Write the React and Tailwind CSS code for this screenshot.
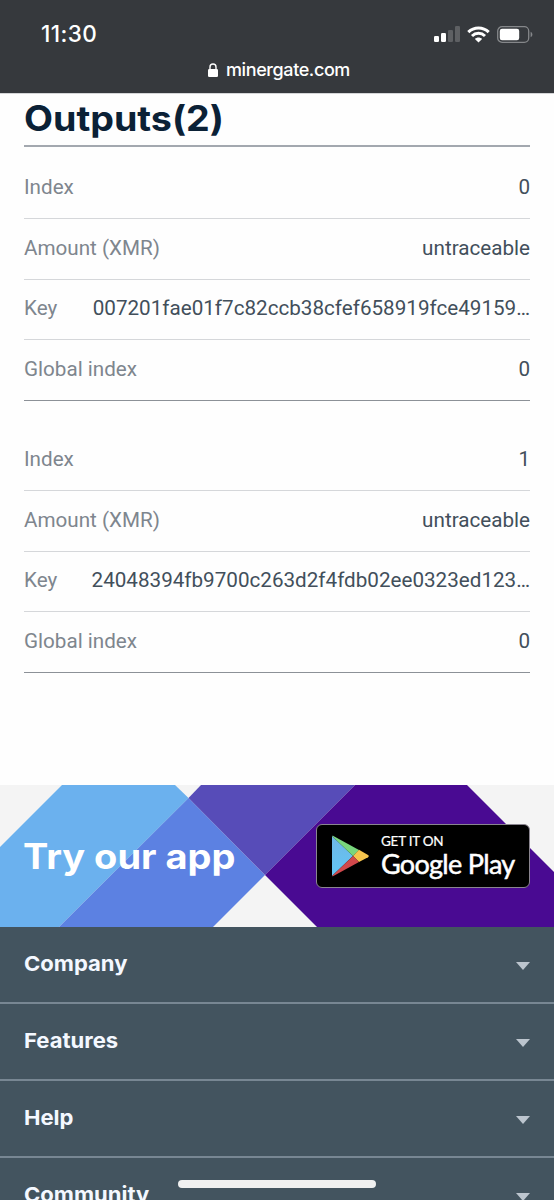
const outputs = [
  { index: 0, amount: "untraceable", keyHash: "007201fae01f7c82ccb38cfef658919fce49159…", globalIndex: 0 },
  { index: 1, amount: "untraceable", keyHash: "24048394fb9700c263d2f4fdb02ee0323ed123…", globalIndex: 0 },
];

const footerLinks = ["Company", "Features", "Help", "Community"];

function StatusBar() {
  return (
    <header className="h-[94px] bg-[#36393d] text-white border-b border-[#d4d5d7]">
      <div className="flex items-center justify-between h-[54px] pt-[14px] pl-[41px] pr-[21px]">
        <span className="text-[22.5px] leading-[26px] font-medium tracking-[0.4px]">11:30</span>
        <div className="flex items-center">
          {/* Signal */}
          <svg width="26" height="16" viewBox="0 0 26 16" fill="#fff">
            <rect x="0" y="10" width="5" height="6" rx="1.2" />
            <rect x="7" y="7" width="5" height="9" rx="1.2" />
            <rect x="14" y="4" width="5" height="12" rx="1.2" opacity="0.2" />
            <rect x="21" y="0" width="5" height="16" rx="1.2" opacity="0.2" />
          </svg>
          {/* Wifi */}
          <svg className="ml-[7px]" width="23" height="17" viewBox="0 0 23 17" fill="none" stroke="#fff" strokeWidth="3">
            <path d="M1.3 6.1C7 0.5 16 0.5 21.7 6.1" />
            <path d="M5 10C8.7 6.4 14.3 6.4 18 10" />
            <path d="M11.5 16.6L7.9 13C9.9 11 13.1 11 15.1 13Z" fill="#fff" stroke="none" />
          </svg>
          {/* Battery */}
          <svg className="ml-[7px]" width="36" height="17" viewBox="0 0 36 17">
            <rect x="0.7" y="0.7" width="31" height="15.6" rx="4.4" fill="none" stroke="#85878a" strokeWidth="1.3" />
            <rect x="2.8" y="2.8" width="19.4" height="11.4" rx="2.2" fill="#fff" />
            <path d="M33.6 5.8C36 6.8 36 10.2 33.6 11.2Z" fill="#85878a" />
          </svg>
        </div>
      </div>
      <div className="flex items-center justify-center h-[32px] pl-[4px]">
        <svg className="mr-[8px]" width="10" height="14" viewBox="0 0 10 14">
          <rect x="0" y="6" width="10" height="8" rx="1.3" fill="#fff" />
          <path d="M2 6.5V4C2 0 8 0 8 4V6.5" fill="none" stroke="#fff" strokeWidth="1.4" />
        </svg>
        <span className="text-[18px] leading-[24px] font-medium tracking-[-0.4px]">minergate.com</span>
      </div>
    </header>
  );
}

function Row({ label, value, last }) {
  return (
    <div
      className={`flex items-center justify-between h-[60.67px] pb-[1.5px] whitespace-nowrap border-b ${
        last ? "border-[#8c9197]" : "border-[#d5d7da]"
      }`}
    >
      <span className="text-[#7e868e]">{label}</span>
      <span className="text-[#424f5b]">{value}</span>
    </div>
  );
}

function OutputCard({ output }) {
  return (
    <div className="font-[Roboto,sans-serif] text-[20.65px]">
      <Row label="Index" value={output.index} />
      <Row label="Amount (XMR)" value={output.amount} />
      <Row label="Key" value={output.keyHash} />
      <Row label="Global index" value={output.globalIndex} last />
    </div>
  );
}

function GooglePlayBadge() {
  return (
    <a className="flex items-center w-[214px] h-[64px] rounded-[6px] border-[1.5px] border-[#8a858f] bg-black text-white">
      <svg className="ml-[14px]" width="39" height="42" viewBox="0 0 39 42">
        <defs>
          <linearGradient id="play" x1="0" y1="0" x2="0" y2="1">
            <stop offset="0" stopColor="#6fb6e6" />
            <stop offset="1" stopColor="#62c6f5" />
          </linearGradient>
        </defs>
        <path d="M1 1L22 21L1 41Z" fill="url(#play)" />
        <path d="M1.5 0.5L28 15L22 21L1.5 1.5Z" fill="#79d67d" />
        <path d="M28 14.8L37 20C38 20.6 38 21.6 37 22.2L28 27L22 21Z" fill="#f6c44d" />
        <path d="M1.5 41.5L28 27L22 21L1.5 40.5Z" fill="#d1484c" />
      </svg>
      <div className="ml-[11px] font-[Lato,sans-serif] whitespace-nowrap [-webkit-text-stroke:0.5px_#fff]">
        <div className="text-[13.5px] leading-[14px] tracking-[-0.25px] [-webkit-text-stroke:0.2px_#fff]">GET IT ON</div>
        <div className="mt-[2px] text-[27px] leading-[28px] tracking-[-0.7px]">Google Play</div>
      </div>
    </a>
  );
}

function AppBanner() {
  return (
    <section className="relative h-[142px] mt-[112px]">
      <svg className="absolute inset-0" width="554" height="142" viewBox="0 0 554 142">
        <rect width="554" height="142" fill="#f4f4f4" />
        <path d="M62 0H175L188.5 13L59 142H0V62Z" fill="#6bb1ee" />
        <path d="M188.5 13L265 90L213 142H59Z" fill="#5c81e2" />
        <path d="M201 0H355L265 90L188.5 13Z" fill="#574cb8" />
        <path d="M355 0H467L554 87V142H317L265 90Z" fill="#490a92" />
      </svg>
      <div className="relative flex items-center justify-between h-full pl-[23px] pr-[24px]">
        <h2 className="origin-left scale-x-[1.085] text-[35px] leading-[40px] font-bold text-white">Try our app</h2>
        <GooglePlayBadge />
      </div>
    </section>
  );
}

function Footer() {
  return (
    <footer className="bg-[#43545f]">
      {footerLinks.map((name) => (
        <div key={name} className="flex items-center justify-between h-[77px] px-[24px] border-b-2 border-[#788793]">
          <span className="origin-left scale-x-[1.075] text-[20.5px] leading-[26px] font-bold text-[#f4f8ff]">{name}</span>
          <svg className="mt-[3px]" width="14" height="8" viewBox="0 0 14 8">
            <path d="M0 0H14L7 8Z" fill="#bcc5ce" />
          </svg>
        </div>
      ))}
    </footer>
  );
}

export default function App() {
  return (
    <div className="relative w-[554px] h-[1200px] overflow-hidden bg-[#fefefe] font-[Inter,sans-serif]">
      <StatusBar />
      <main className="px-[24px]">
        <div className="h-[53px] pt-[4px] border-b-2 border-[#a3a8af]">
          <h1 className="origin-left scale-x-[1.075] text-[35px] leading-[40px] font-bold text-[#0b2136]">Outputs(2)</h1>
        </div>
        <div className="flex flex-col gap-[29.33px] pt-[11.33px]">
          {outputs.map((output) => (
            <OutputCard key={output.index} output={output} />
          ))}
        </div>
      </main>
      <AppBanner />
      <Footer />
      {/* Home indicator */}
      <div className="absolute left-[178px] top-[1180px] w-[198px] h-[8px] rounded-full bg-[#f0f0f0]" />
    </div>
  );
}
